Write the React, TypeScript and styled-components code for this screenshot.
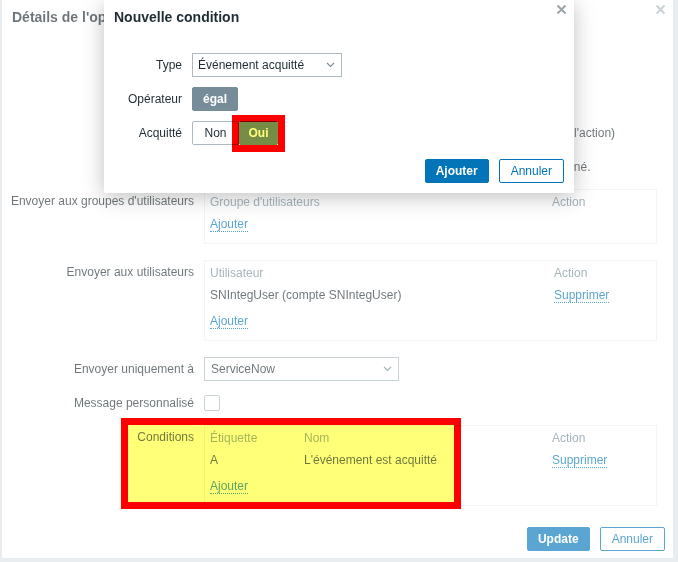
import React from "react";
import styled, { createGlobalStyle } from "styled-components";

const GlobalStyle = createGlobalStyle`
  html, body { margin: 0; padding: 0; }
  body {
    background: #dfe4e7;
    font-family: "Liberation Sans", Arial, sans-serif;
    font-size: 12px;
    color: #1f2c33;
  }
  * { box-sizing: border-box; }
`;

const Page = styled.div`
  position: relative;
  width: 678px;
  height: 562px;
  overflow: hidden;
  padding-left: 2px;
`;

const Dialog = styled.div`
  position: relative;
  width: 671px;
  height: 558px;
  background: #fff;
  display: flex;
  flex-direction: column;
`;

const Header = styled.div`
  height: 53px;
  padding: 10px 10px 0;
  font-size: 14px;
  line-height: 14px;
  font-weight: bold;
  white-space: nowrap;
  overflow: hidden;
`;

const Close = styled.span`
  position: absolute;
  top: 4px;
  right: 7px;
  width: 11px;
  height: 11px;
  display: flex;
`;

const Form = styled.div<{ $label: number; $value: number }>`
  display: grid;
  grid-template-columns: ${(p) => p.$label}px ${(p) => p.$value}px;
  column-gap: 10px;
  row-gap: 10px;
  align-items: start;
`;

const Label = styled.div<{ $box?: boolean }>`
  text-align: right;
  white-space: nowrap;
  line-height: ${(p) => (p.$box ? "14px" : "24px")};
  padding-top: ${(p) => (p.$box ? "5px" : "0")};
  min-height: 24px;
`;

const Field = styled.div`
  display: flex;
  align-items: center;
  gap: 10px;
  min-height: 24px;
  white-space: nowrap;
`;

const Select = styled.div<{ $w: number }>`
  width: ${(p) => p.$w}px;
  height: 24px;
  border: 1px solid #acbbc2;
  background: #fff;
  display: flex;
  align-items: center;
  justify-content: space-between;
  padding: 0 6px 0 5px;
`;

const Input = styled.div<{ $w: number }>`
  width: ${(p) => p.$w}px;
  height: 24px;
  border: 1px solid #acbbc2;
  line-height: 22px;
  padding: 0 5px;
`;

const Checkbox = styled.div`
  width: 16px;
  height: 16px;
  border: 1px solid #acbbc2;
  border-radius: 2px;
  background: #fff;
`;

const Box = styled.div`
  border: 1px solid #ebeef0;
  padding: 3px 5px 10px;
  margin-bottom: 6px;
`;

const TRow = styled.div<{ $cols: string; $pad?: number; $head?: boolean }>`
  display: grid;
  grid-template-columns: ${(p) => p.$cols};
  padding-top: ${(p) => p.$pad ?? 4}px;
  height: ${(p) => (p.$pad ?? 4) + 18}px;
  line-height: 18px;
  color: ${(p) => (p.$head ? "#768d99" : "#1f2c33")};
  white-space: nowrap;
`;

const Cell = styled.span`
  line-height: 18px;
`;

const Link = styled.a`
  color: #0275b8;
  text-decoration: none;
  border-bottom: 1px dotted #0275b8;
`;

const Footer = styled.div`
  margin-top: auto;
  display: flex;
  justify-content: flex-end;
  gap: 10px;
  padding: 0 8px 7px 0;
`;

const Button = styled.button<{ $alt?: boolean }>`
  height: 24px;
  padding: 0 ${(p) => (p.$alt ? "11px" : "10px")};
  border: 1px solid #0275b8;
  border-radius: 2px;
  font: inherit;
  font-weight: ${(p) => (p.$alt ? "normal" : "bold")};
  background: ${(p) => (p.$alt ? "#fff" : "#0275b8")};
  color: ${(p) => (p.$alt ? "#0275b8" : "#fff")};
`;

const Veil = styled.div`
  position: absolute;
  inset: 0;
  background: rgba(255, 255, 255, 0.35);
  z-index: 1;
`;

const Modal = styled.div`
  position: absolute;
  left: 104px;
  top: 0;
  width: 470px;
  height: 193px;
  background: #fff;
  box-shadow: 0 4px 20px rgba(0, 0, 0, 0.25);
  display: flex;
  flex-direction: column;
  z-index: 2;
`;

const ModalForm = styled(Form)`
  padding-left: 10px;
`;

const ModalFooter = styled(Footer)`
  padding: 0 10px 10px 0;
`;

const Segmented = styled.div`
  display: flex;
`;

const Segment = styled.div<{ $on?: boolean; $w: number }>`
  width: ${(p) => p.$w}px;
  height: 24px;
  line-height: 22px;
  text-align: center;
  border: 1px solid ${(p) => (p.$on ? "#768d99" : "#acbbc2")};
  border-radius: 2px;
  background: ${(p) => (p.$on ? "#768d99" : "#fff")};
  color: ${(p) => (p.$on ? "#fff" : "#1f2c33")};
  font-weight: ${(p) => (p.$on ? "bold" : "normal")};
`;

/* highlighter marks drawn over the screenshot */
const Mark = styled.div`
  position: absolute;
  border: 7px solid #ff0000;
  background: #ffff78;
  mix-blend-mode: multiply;
  z-index: 3;
`;

const Chevron = () => (
  <svg width="9" height="6" viewBox="0 0 9 6">
    <polyline points="1,1 4.5,4.5 8,1" fill="none" stroke="#768d99" strokeWidth="1.1" />
  </svg>
);

const Cross = ({ color }: { color: string }) => (
  <svg width="11" height="11" viewBox="0 0 11 11">
    <path d="M1.5 1.5 L9.5 9.5 M9.5 1.5 L1.5 9.5" stroke={color} strokeWidth="2" />
  </svg>
);

const COLS2 = "342px 1fr";
const COLS_USERS = "344px 1fr";
const COLS3 = "94px 248px 1fr";

export default function App() {
  return (
    <Page>
      <GlobalStyle />
      <Dialog>
        <Header>Détails de l'opération</Header>
        <Close>
          <Cross color="#acbbc2" />
        </Close>
        <Form $label={192} $value={453}>
          {/* rows hidden behind the open condition dialog */}
          <Label />
          <Field>
            <Select $w={200}>
              <span />
              <Chevron />
            </Select>
          </Field>

          <Label />
          <Field>
            <Input $w={50} />
            <Input $w={50} />
          </Field>

          <Label />
          <Field>
            <Input $w={178} />
            (0 - utiliser la valeur par défaut de l'action)
          </Field>

          <Label />
          <Field>* Au moins un utilisateur ou un groupe d'utilisateurs doit être sélectionné.</Field>

          <Label $box>Envoyer aux groupes d'utilisateurs</Label>
          <Box>
            <TRow $cols={COLS2} $pad={0} $head>
              <Cell>Groupe d'utilisateurs</Cell>
              <Cell>Action</Cell>
            </TRow>
            <TRow $cols={COLS2}>
              <Cell>
                <Link>Ajouter</Link>
              </Cell>
            </TRow>
          </Box>

          <Label $box>Envoyer aux utilisateurs</Label>
          <Box>
            <TRow $cols={COLS_USERS} $pad={0} $head>
              <Cell>Utilisateur</Cell>
              <Cell>Action</Cell>
            </TRow>
            <TRow $cols={COLS_USERS}>
              <Cell>SNIntegUser (compte SNIntegUser)</Cell>
              <Cell>
                <Link>Supprimer</Link>
              </Cell>
            </TRow>
            <TRow $cols={COLS2} $pad={8}>
              <Cell>
                <Link>Ajouter</Link>
              </Cell>
            </TRow>
          </Box>

          <Label>Envoyer uniquement à</Label>
          <Field>
            <Select $w={195}>
              <span style={{ paddingLeft: 1 }}>ServiceNow</span>
              <Chevron />
            </Select>
          </Field>

          <Label>Message personnalisé</Label>
          <Field>
            <Checkbox />
          </Field>

          <Label $box>Conditions</Label>
          <Box>
            <TRow $cols={COLS3} $pad={0} $head>
              <Cell>Étiquette</Cell>
              <Cell>Nom</Cell>
              <Cell>Action</Cell>
            </TRow>
            <TRow $cols={COLS3}>
              <Cell>A</Cell>
              <Cell>L'événement est acquitté</Cell>
              <Cell>
                <Link>Supprimer</Link>
              </Cell>
            </TRow>
            <TRow $cols={COLS3} $pad={8}>
              <Cell>
                <Link>Ajouter</Link>
              </Cell>
            </TRow>
          </Box>
        </Form>
        <Footer>
          <Button>Update</Button>
          <Button $alt>Annuler</Button>
        </Footer>
      </Dialog>

      <Veil />

      <Modal>
        <Header>Nouvelle condition</Header>
        <Close>
          <Cross color="#9aa5ab" />
        </Close>
        <ModalForm $label={68} $value={370}>
          <Label>Type</Label>
          <Field>
            <Select $w={150}>
              Événement acquitté
              <Chevron />
            </Select>
          </Field>

          <Label>Opérateur</Label>
          <Field>
            <Segment $on $w={46}>égal</Segment>
          </Field>

          <Label>Acquitté</Label>
          <Field>
            <Segmented>
              <Segment $w={47}>Non</Segment>
              <Segment $on $w={39}>Oui</Segment>
            </Segmented>
          </Field>
        </ModalForm>
        <ModalFooter>
          <Button>Ajouter</Button>
          <Button $alt>Annuler</Button>
        </ModalFooter>
      </Modal>

      <Mark style={{ left: 232, top: 115, width: 53, height: 37 }} />
      <Mark style={{ left: 121, top: 418, width: 340, height: 91 }} />
    </Page>
  );
}
